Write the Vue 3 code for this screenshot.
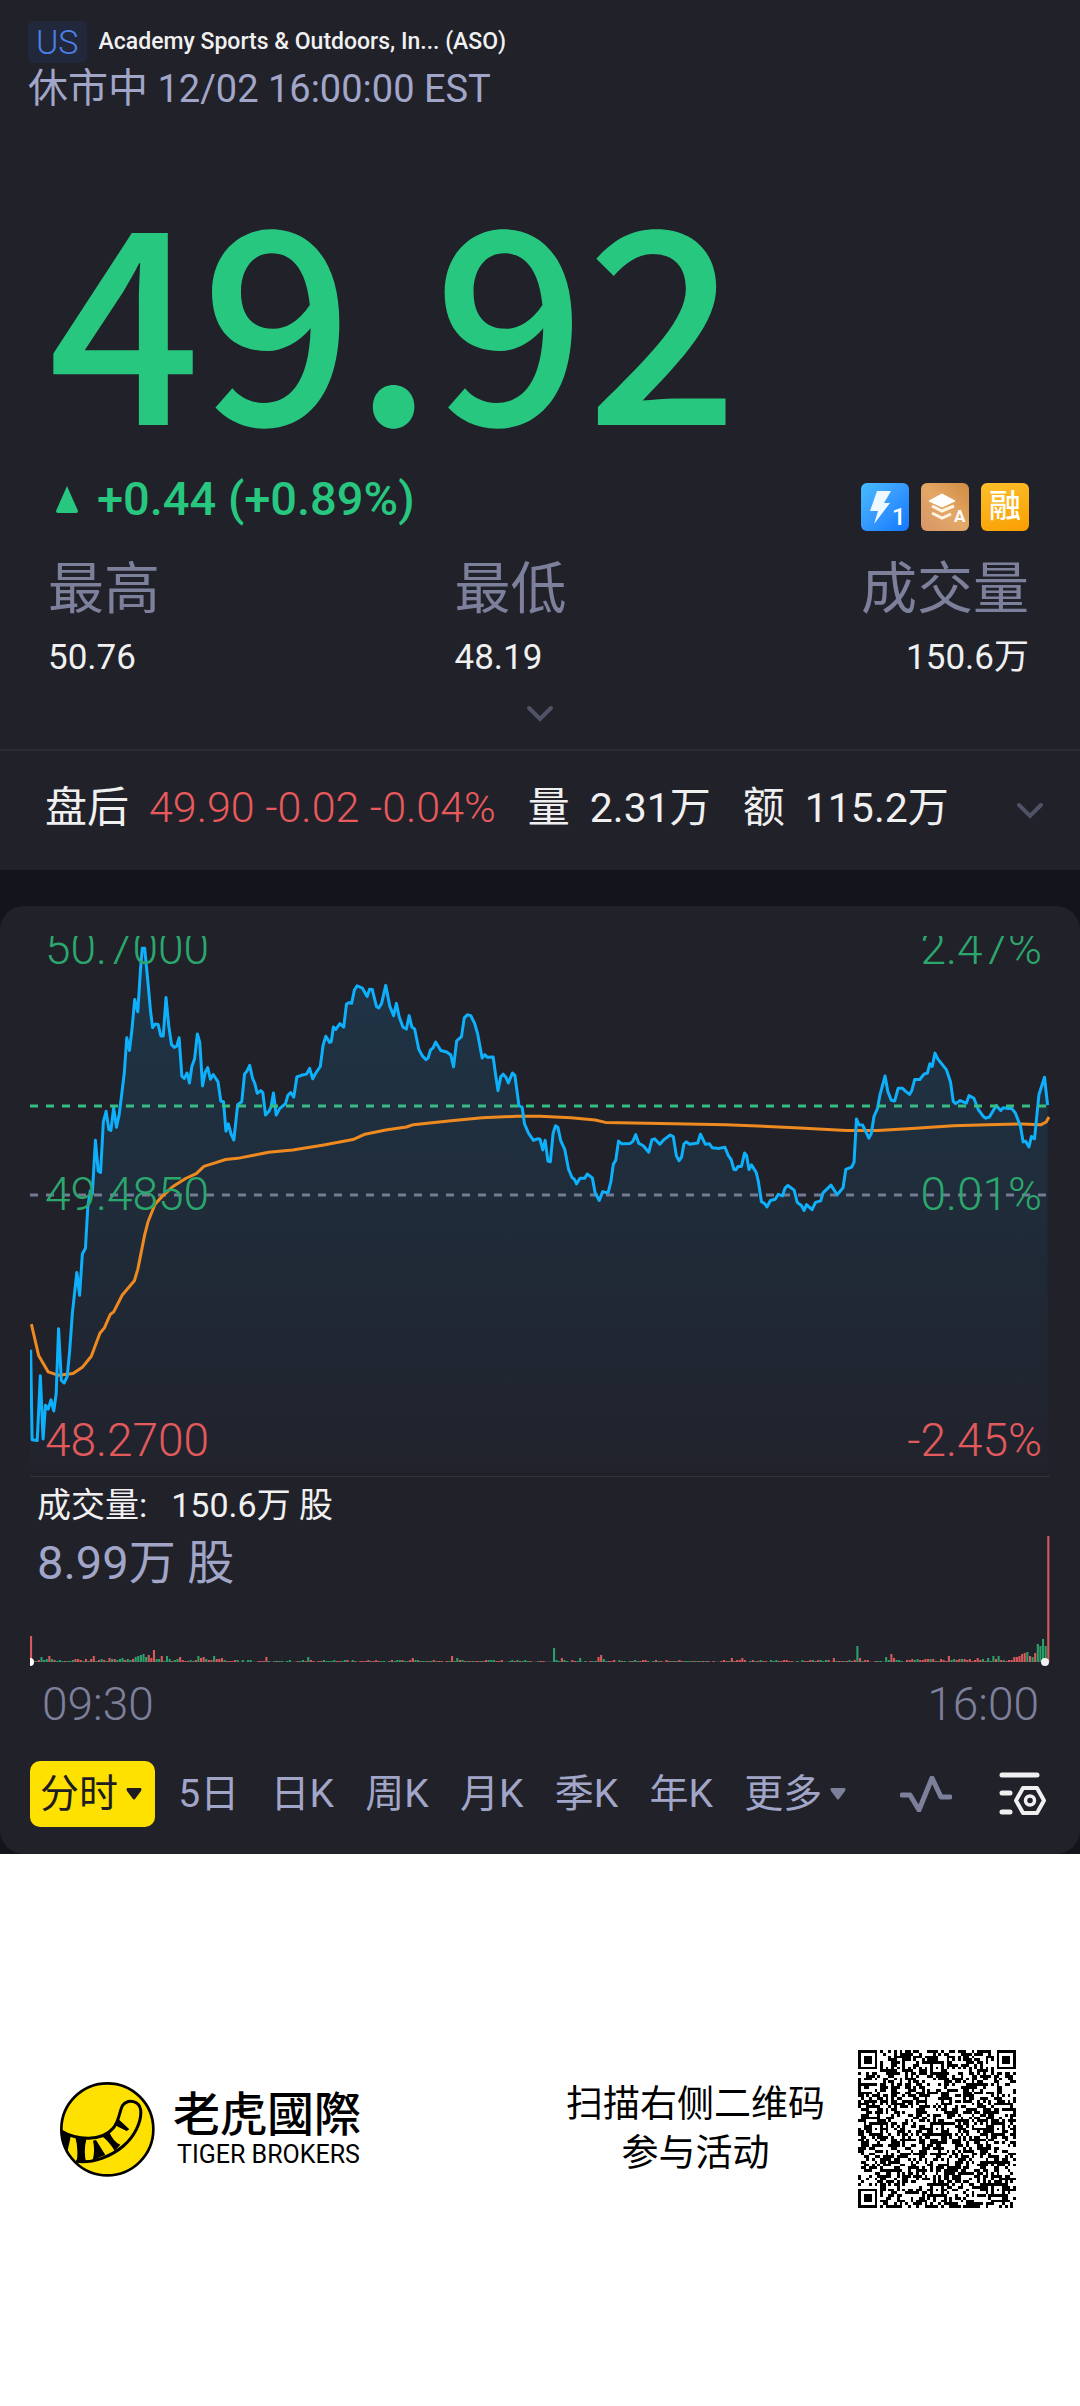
<template>
  <div class="page">
    <header class="head">
      <div class="name-row">
        <span class="market">US</span>
        <h1 class="name">Academy Sports &amp; Outdoors, In... (ASO)</h1>
      </div>
      <p class="status"><span class="zh">休市中</span> 12/02 16:00:00 EST</p>
    </header>

    <section class="quote">
      <div class="price">49.92</div>
      <div class="change-row">
        <div class="change">
          <svg class="up" viewBox="0 0 24 28"><path d="M12 1 23 26Q23 28 21 28H3Q1 28 1 26Z" fill="#28c780" /></svg>
          <span>+0.44 (+0.89%)</span>
        </div>
        <div class="tags">
          <svg viewBox="0 0 48 48">
            <defs>
              <linearGradient id="tagBlue" x1="0" y1="0" x2="1" y2="1">
                <stop offset="0" stop-color="#45bcff" />
                <stop offset="0.45" stop-color="#389cff" />
                <stop offset="1" stop-color="#1278ff" />
              </linearGradient>
            </defs>
            <rect width="48" height="48" rx="6" fill="url(#tagBlue)" />
            <path d="M16 8H30L23 20H29L13 41L17 28H9Z" fill="#eef8ff" />
            <text x="31" y="42" class="tag-num">1</text>
          </svg>
          <svg viewBox="0 0 48 48">
            <defs>
              <linearGradient id="tagTan" x1="0" y1="1" x2="1" y2="0">
                <stop offset="0" stop-color="#d79469" />
                <stop offset="0.5" stop-color="#e4a866" />
                <stop offset="1" stop-color="#cf8b42" />
              </linearGradient>
            </defs>
            <rect width="48" height="48" rx="6" fill="url(#tagTan)" />
            <path d="M21 11 34 18 21 24 8 18Z" fill="#fff" stroke="#fff" stroke-width="1" stroke-linejoin="round" />
            <path d="M11 23 21 28 33 23M11 30 21 35 30 31" fill="none" stroke="#fff3e2" stroke-width="3" />
            <text x="33" y="39" class="tag-letter">A</text>
          </svg>
          <span class="rong">融</span>
        </div>
      </div>

      <dl class="stats">
        <div v-for="s in stats" :key="s.label" class="stat">
          <dt>{{ s.label }}</dt>
          <dd>{{ s.value }}</dd>
        </div>
      </dl>
      <button class="more" aria-label="展开">
        <svg class="chevron" viewBox="0 0 28 18"><path d="M3 3 14 14 25 3" /></svg>
      </button>
    </section>

    <section class="after">
      <span class="zh">盘后</span>
      <span class="red">49.90 -0.02 -0.04%</span>
      <span class="zh">量</span>
      <span class="num">2.31万</span>
      <span class="zh">额</span>
      <span class="num">115.2万</span>
      <button class="fold" aria-label="盘后详情">
        <svg class="chevron" viewBox="0 0 28 18"><path d="M3 3 14 14 25 3" /></svg>
      </button>
    </section>

    <div class="stage">
      <main class="card">
        <div class="plot">
          <svg class="lines" viewBox="87 94 2962 1411" preserveAspectRatio="none">
            <defs>
              <linearGradient id="area" gradientUnits="userSpaceOnUse" x1="0" y1="120" x2="0" y2="1490">
                <stop offset="0" stop-color="#0fb0fb" stop-opacity="0.14" />
                <stop offset="1" stop-color="#0fb0fb" stop-opacity="0.01" />
              </linearGradient>
            </defs>
            <polygon :points="areaPoints" fill="url(#area)" />
            <line x1="87" y1="771" x2="3042" y2="771" class="dash base" />
            <polyline :points="avgPoints" class="stroke avg" />
            <polyline :points="pricePoints" class="stroke now" />
            <line x1="87" y1="538" x2="3042" y2="538" class="dash last" />
          </svg>
          <div class="axis">
            <span class="green">50.7000</span>
            <span class="green">49.4850</span>
            <span class="fall">48.2700</span>
          </div>
          <div class="axis right">
            <span class="green">2.47%</span>
            <span class="green">0.01%</span>
            <span class="fall">-2.45%</span>
          </div>
        </div>

        <div class="volume">
          <div class="vol-text">
            <p class="vol-now"><span>成交量:</span><span>150.6万 股</span></p>
            <p class="vol-max">8.99万 股</p>
          </div>
          <svg class="bars" viewBox="0 0 1020 130" preserveAspectRatio="none">
            <rect x="0" y="125" width="1020" height="1" fill="#353642" />
            <rect
              v-for="(b, i) in bars"
              :key="i"
              :x="i * 2.615"
              :y="126 - b.h"
              width="2.1"
              :height="b.h"
              :fill="b.up ? '#2a9f69' : '#d9595b'"
            />
            <circle cx="0" cy="126" r="4" fill="#fff" />
            <circle cx="1015" cy="126" r="4" fill="#f2f2f2" />
          </svg>
        </div>
        <div class="times"><span>09:30</span><span>16:00</span></div>

        <nav class="tabs">
          <button
            v-for="t in tabs"
            :key="t.label"
            class="tab"
            :class="{ active: t.label === current }"
            @click="current = t.label"
          >
            {{ t.label }}<svg v-if="t.menu" class="caret" viewBox="0 0 16 12"><path d="M1 0H15Q16 1 15 3L9 11Q8 12 7 11L1 3Q0 1 1 0Z" fill="currentColor" /></svg>
          </button>
          <button class="tool wave" aria-label="指标">
            <svg viewBox="0 0 52 36"><path d="M2 19H10L19 34 32 2 41 21H50" /></svg>
          </button>
          <button class="tool" aria-label="设置">
            <svg viewBox="0 0 48 44">
              <path d="M3 3H38M3 21H11M3 40H11" fill="none" stroke="#f0f0f0" stroke-width="5" stroke-linecap="round" />
              <path d="M24 16H38L45 28.500 38 41H24L17 28.500Z" fill="none" stroke="#f0f0f0" stroke-width="4" stroke-linejoin="round" />
              <circle cx="31" cy="28.500" r="4.500" fill="none" stroke="#f0f0f0" stroke-width="3.500" />
            </svg>
          </button>
        </nav>
      </main>
    </div>

    <footer class="foot">
      <svg class="logo" viewBox="0 0 285 285">
        <defs><clipPath id="disc"><circle cx="142" cy="142" r="138" /></clipPath></defs>
        <circle cx="142" cy="142" r="138" fill="#ffe100" />
        <g clip-path="url(#disc)">
          <path d="M0 145C50 175 125 180 160 138C178 116 178 88 188 70C206 48 238 58 242 84C246 120 222 165 190 192C155 222 100 245 48 238" fill="none" stroke="#000" stroke-width="9" />
          <path d="M0 142 32 164 22 210ZM46 166 80 167Q70 205 78 240L50 238Q56 200 46 166ZM99 176 108 174 136 219 98 234Q106 205 99 176ZM124 161 146 146Q160 180 181 188L164 207Q148 178 124 161ZM162 128 174 110 208 142 200 147Z" />
        </g>
        <circle cx="142" cy="142" r="138" fill="none" stroke="#000" stroke-width="8" />
      </svg>
      <div class="brand">
        <strong>老虎國際</strong>
        <span>TIGER BROKERS</span>
      </div>
      <p class="scan">扫描右侧二维码<br />参与活动</p>
      <svg class="qr" viewBox="0 0 57 57" shape-rendering="crispEdges"><path :d="qrPath" /></svg>
    </footer>
  </div>
</template>

<script setup>
import { ref } from 'vue'

const stats = [
  { label: '最高', value: '50.76' },
  { label: '最低', value: '48.19' },
  { label: '成交量', value: '150.6万' },
]

const current = ref('分时')
const tabs = [
  { label: '分时', menu: true },
  { label: '5日' },
  { label: '日K' },
  { label: '周K' },
  { label: '月K' },
  { label: '季K' },
  { label: '年K' },
  { label: '更多', menu: true },
]

// 上半场 / 下半场 price points, the second half starts at x = 1568
const HALF = 1568
const priceA = '89,1175 93,1410 108,1412 117,1243 125,1408 132,1320 140,1330 148,1306 156,1335 163,1290 170,1120 178,1255 186,1262 195,1245 202,1180 210,1080 223,973 231,1033 239,925 248,910 255,800 262,760 268,768 277,628 285,708 292,712 300,580 308,552 316,600 322,602 330,542 338,594 346,560 353,510 361,450 368,360 376,393 384,330 391,260 400,292 408,180 413,126 420,126 430,220 437,290 443,333 451,324 459,325 467,355 474,355 482,255 490,330 498,378 506,385 513,382 520,360 528,460 535,466 543,452 550,478 557,435 565,415 573,350 580,372 588,486 596,450 603,438 611,468 619,456 633,475 641,525 649,527 656,604 663,585 671,612 679,627 690,535 702,527 710,455 717,447 725,432 733,465 740,480 747,505 757,498 763,503 771,562 781,552 787,540 794,504 802,562 812,545 829,532 836,510 844,503 853,515 862,462 875,458 890,455 899,440 908,467 917,452 930,435 938,380 946,356 957,372 962,370 968,332 975,338 987,323 998,332 1006,272 1014,268 1021,270 1029,235 1037,224 1052,230 1066,252 1073,233 1081,234 1093,278 1100,282 1108,270 1120,223 1132,278 1143,302 1151,270 1159,305 1170,332 1180,337 1188,302 1196,332 1204,337 1216,390 1227,408 1237,417 1243,413 1250,392 1257,387 1265,371 1280,393 1297,397 1309,405 1317,436 1326,368 1340,357 1348,308 1357,300 1367,302 1378,322 1387,350 1400,413 1408,404 1415,411 1432,410 1438,450 1446,498 1454,462 1461,455 1469,463 1476,478 1488,452 1495,458 1507,538 1516,541 1523,585 1535,610 1549,628 1560,624'
const priceB = '0,625 8,653 15,628 23,682 30,684 38,610 45,590 52,594 60,628 72,652 83,704 93,725 100,730 106,742 116,727 130,727 137,716 152,726 160,765 172,785 182,762 190,764 198,764 206,735 213,690 220,680 228,630 238,637 262,636 270,630 278,613 287,636 300,642 316,659 325,626 333,624 348,638 360,626 378,614 387,618 396,668 404,681 411,672 418,637 425,632 435,638 458,635 466,612 480,638 492,637 500,647 520,649 537,646 547,668 555,678 563,704 569,705 575,696 585,696 594,661 600,668 607,704 614,692 628,712 634,735 643,788 652,793 659,802 669,785 683,782 692,769 704,773 712,752 720,746 738,758 747,790 759,798 767,811 774,796 790,809 800,790 815,786 822,765 845,745 863,770 880,752 888,704 905,698 912,685 919,572 926,587 937,588 955,622 962,610 970,565 980,545 987,510 1002,460 1010,500 1020,523 1030,525 1040,492 1053,492 1062,500 1073,508 1080,497 1088,469 1103,469 1115,455 1125,452 1132,428 1139,435 1147,400 1155,415 1180,443 1192,475 1200,526 1207,532 1220,524 1238,531 1246,511 1260,518 1273,548 1288,566 1295,570 1305,567 1325,537 1338,550 1345,543 1360,545 1370,545 1380,556 1395,590 1403,632 1410,630 1420,645 1427,618 1436,624 1449,508 1465,463 1474,536'
const avgA = '91,1108 112,1190 140,1233 170,1242 212,1237 240,1220 265,1192 290,1132 303,1118 320,1083 330,1076 355,1032 390,995 400,965 410,920 420,875 430,840 450,795 470,775 500,750 540,727 570,715 592,696 620,688 655,678 690,675 740,666 780,659 850,653 940,640 1025,626 1060,612 1120,601 1180,593 1200,587 1310,577 1400,569 1500,565'
const avgB = '0,565 90,569 160,575 190,581 350,584 540,587 740,595 890,602 980,602 1080,597 1200,590 1300,587 1400,585 1455,587 1470,580 1478,567'

function join(a, b) {
  const rest = b.split(' ').map((p) => {
    const [x, y] = p.split(',').map(Number)
    return x + HALF + ',' + y
  })
  return a + ' ' + rest.join(' ')
}
const pricePoints = join(priceA, priceB)
const avgPoints = join(avgA, avgB)
const areaPoints = '89,1490 ' + pricePoints + ' 3042,1490'

function random(seed) {
  let s = seed
  return () => {
    s = (s * 16807) % 2147483647
    return s / 2147483647
  }
}

// one bar per minute, the busy minutes are listed: [index, height, up]
const busy = [
  [0, 26, 0], [4, 5, 1], [7, 6, 0], [24, 6, 0], [30, 4, 0], [35, 4, 1], [40, 5, 1], [41, 6, 1], [42, 7, 1], [43, 8, 1],
  [44, 5, 1], [45, 7, 0], [46, 4, 0], [47, 12, 0], [50, 6, 0], [52, 6, 1], [57, 5, 0], [64, 6, 1], [65, 4, 0], [66, 5, 0],
  [70, 6, 1], [73, 4, 0], [90, 5, 0], [106, 5, 1], [146, 4, 0], [161, 6, 0], [163, 4, 1], [200, 14, 1], [203, 4, 0],
  [210, 4, 1], [217, 5, 0], [218, 7, 0], [219, 3, 1], [268, 4, 0], [272, 4, 0], [307, 4, 0], [316, 16, 1], [317, 4, 0],
  [327, 5, 1], [329, 8, 0], [330, 4, 0], [351, 6, 0], [362, 4, 0], [366, 4, 1], [368, 6, 1], [370, 6, 1], [376, 5, 0],
  [377, 5, 0], [378, 6, 0], [379, 8, 0], [380, 9, 0], [381, 10, 1], [382, 6, 0], [383, 5, 1], [384, 9, 0], [385, 18, 1],
  [386, 16, 1], [387, 23, 1], [388, 16, 1], [389, 126, 0],
]
const rnd = random(77)
const bars = Array.from({ length: 390 }, (_, i) => {
  const r = rnd()
  const up = rnd() > 0.5
  const lively = i < 75 || i > 335
  return { h: Math.round(lively ? 1 + r * 2.4 : 0.4 + r * r * 2), up }
})
busy.forEach(([i, h, up]) => {
  bars[i] = { h, up: !!up }
})

// 57 x 57 code: finders, alignment marks, timing lines, data
const N = 57
const bit = random(2021)
function ring(x, y, cx, cy, out) {
  const d = Math.max(Math.abs(x - cx), Math.abs(y - cy))
  if (d > out) return null
  return out === 4 ? d !== 2 && d !== 4 : d !== 1
}
let qrPath = ''
for (let y = 0; y < N; y++) {
  for (let x = 0; x < N; x++) {
    let on = bit() > 0.5
    if (x === 6) on = y % 2 === 0
    if (y === 6) on = x % 2 === 0
    for (const [cx, cy] of [[28, 6], [6, 28], [28, 28], [50, 28], [28, 50], [50, 50]]) {
      const v = ring(x, y, cx, cy, 2)
      if (v !== null) on = v
    }
    for (const [cx, cy] of [[3, 3], [N - 4, 3], [3, N - 4]]) {
      const v = ring(x, y, cx, cy, 4)
      if (v !== null) on = v
    }
    if (on) qrPath += `M${x} ${y}h1v1h-1z`
  }
}
</script>

<style>
body {
  background: #fff;
}
</style>

<style scoped>
.page {
  font-family: Roboto, "Noto Sans CJK SC", sans-serif;
  font-weight: 400;
  background: #21212a;
  color: #f0f0f0;
}
h1,
p,
dl,
dd {
  margin: 0;
}
button {
  padding: 0;
  border: 0;
  background: none;
  color: inherit;
  font: inherit;
  cursor: pointer;
}
svg {
  display: block;
}
.head {
  padding: 21px 28px 0;
}
.name-row {
  display: flex;
  align-items: center;
  gap: 12px;
}
.market {
  padding: 0 8px;
  border-radius: 6px;
  background: #21283b;
  color: #4d7fe8;
  font-size: 34px;
  line-height: 42px;
  font-weight: 300;
}
.name {
  font-size: 23px;
  line-height: 32px;
  font-weight: 500;
}
.status {
  padding-top: 2px;
  color: #a1a6c8;
  font-size: 38px;
  line-height: 48px;
}
.status .zh {
  font-size: 40px;
}
.quote {
  padding: 100px 48px 0;
}
.price {
  color: #28c780;
  font-family: "Noto Sans CJK SC", sans-serif;
  font-size: 268px;
  line-height: 190px;
  font-weight: 500;
}
.change-row {
  display: flex;
  justify-content: space-between;
  align-items: flex-end;
  margin-top: 67px;
  padding-right: 3px;
}
.change {
  display: flex;
  align-items: center;
  gap: 18px;
  padding: 0 0 4px 7px;
  color: #28c780;
  font-size: 47px;
  line-height: 57px;
  font-weight: 500;
}
.up {
  width: 24px;
  height: 28px;
}
.tags {
  display: flex;
  gap: 12px;
}
.tags svg,
.rong {
  width: 48px;
  height: 48px;
}
.tag-num {
  fill: #fff;
  font-size: 24px;
  font-weight: 500;
}
.tag-letter {
  fill: #fff;
  font-size: 17px;
  font-weight: 700;
}
.rong {
  border-radius: 6px;
  background: linear-gradient(160deg, #fcc02c, #fa9e00);
  color: #fff;
  font-size: 32px;
  line-height: 46px;
  font-weight: 500;
  text-align: center;
}
.stats {
  display: flex;
  justify-content: space-between;
  margin-top: 24px;
  padding-right: 3px;
}
.stat:last-child {
  text-align: right;
}
.stat dt {
  color: #7d809b;
  font-size: 56px;
  line-height: 68px;
}
.stat dd {
  font-size: 35px;
  line-height: 70px;
}
.more {
  display: block;
  width: 100%;
  padding: 12px 0 26px;
}
.chevron {
  width: 28px;
  height: 18px;
  margin: 0 auto;
  fill: none;
  stroke: #505366;
  stroke-width: 4;
  stroke-linecap: round;
}
.after {
  display: flex;
  align-items: baseline;
  height: 119px;
  padding: 0 36px 0 45px;
  border-top: 2px solid #2c2c37;
  font-size: 41px;
  line-height: 112px;
  white-space: pre;
}
.after .zh {
  margin-right: 20px;
  font-size: 42px;
}
.after .red {
  margin-right: 32px;
  color: #e85a5c;
  font-size: 43px;
  font-weight: 300;
}
.after .num {
  margin-right: 32px;
}
.fold {
  align-self: center;
  margin-left: auto;
}
.stage {
  padding-top: 36px;
  background: #14141d;
}
.card {
  padding: 30px 30px 27px;
  border-radius: 24px;
  background: #21212a;
}
.plot {
  display: grid;
  height: 540px;
  overflow: hidden;
  border-bottom: 1px solid #30313d;
}
.plot > * {
  grid-area: 1 / 1;
  min-height: 0;
}
.lines {
  width: 100%;
  height: 540px;
}
.stroke {
  fill: none;
  stroke-width: 3;
  stroke-linejoin: round;
  vector-effect: non-scaling-stroke;
}
.now {
  stroke: #0fb0fb;
}
.avg {
  stroke: #ef8a21;
}
.dash {
  stroke-width: 3;
  stroke-dasharray: 8 8;
  vector-effect: non-scaling-stroke;
}
.last {
  stroke: #37bd83;
}
.base {
  stroke: #737b93;
}
.axis {
  display: flex;
  flex-direction: column;
  justify-content: space-between;
  margin: -15px 8px 9px 15px;
  font-size: 46px;
  line-height: 54px;
  font-weight: 300;
}
.axis.right {
  text-align: right;
}
.green {
  color: #2ba76d;
}
.fall {
  color: #e15a5c;
}
.volume {
  display: grid;
}
.volume > * {
  grid-area: 1 / 1;
}
.vol-text {
  padding: 4px 7px 0;
}
.vol-now {
  display: flex;
  gap: 24px;
  font-size: 34px;
  line-height: 48px;
}
.vol-max {
  color: #a1a6c8;
  font-size: 47px;
  line-height: 68px;
}
.bars {
  width: 100%;
  height: 130px;
  margin-top: 59px;
}
.times {
  display: flex;
  justify-content: space-between;
  padding: 10px 11px 0 12px;
  color: #7d809b;
  font-size: 46px;
  line-height: 56px;
  font-weight: 300;
}
.tabs {
  display: flex;
  align-items: center;
  justify-content: space-between;
  margin-top: 29px;
  padding-right: 3px;
  color: #a1a6c8;
}
.tab {
  display: flex;
  align-items: center;
  gap: 8px;
  font-size: 39px;
  line-height: 66px;
}
.active {
  margin-right: -8px;
  padding: 0 13px 0 10px;
  border-radius: 10px;
  background: #ffe100;
  color: #1c1c22;
}
.caret {
  width: 16px;
  height: 12px;
}
.tab:not(.active) .caret {
  color: #7d809b;
}
.wave {
  margin: 0 16px 0 22px;
}
.wave svg {
  width: 52px;
  height: 36px;
  fill: none;
  stroke: #7d809b;
  stroke-width: 5;
  stroke-linecap: round;
  stroke-linejoin: round;
}
.tool:last-child svg {
  width: 48px;
  height: 44px;
}
.foot {
  display: flex;
  align-items: center;
  padding: 196px 64px 198px 60px;
  background: #fff;
  color: #000;
}
.logo {
  width: 95px;
  height: 95px;
}
.brand {
  display: flex;
  flex-direction: column;
  margin-left: 18px;
}
.brand strong {
  font-family: "Noto Sans CJK TC", sans-serif;
  font-size: 47px;
  line-height: 52px;
  font-weight: 500;
}
.brand span {
  padding-left: 4px;
  font-size: 25px;
  line-height: 36px;
}
.scan {
  margin-left: auto;
  font-size: 37px;
  line-height: 49px;
  text-align: center;
}
.qr {
  width: 158px;
  height: 158px;
  margin-left: 33px;
}
</style>
